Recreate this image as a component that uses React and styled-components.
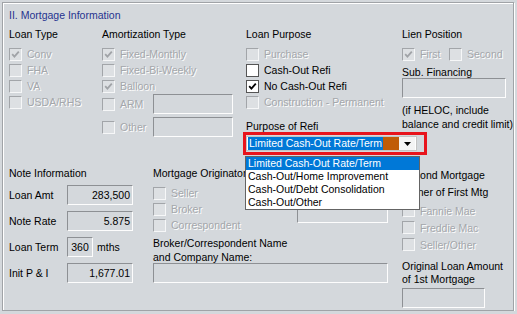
import React from "react";
import styled, { createGlobalStyle } from "styled-components";

const GlobalStyle = createGlobalStyle`
  html, body { margin: 0; padding: 0; background: #d4d8dc; }
  body {
    font-family: "Liberation Sans", Arial, sans-serif;
    font-size: 10.5px;
    color: #000;
  }
  * { box-sizing: border-box; }
`;

const Frame = styled.div`
  margin: 2px 0 0 2px;
  width: 512px;
  height: 309px;
  border: 1px solid #a0a3a7;
  box-shadow: 1px 1px 0 #fff, inset 1px 1px 0 #fff;
  padding: 5px 6px 0 6px;
`;

const Title = styled.div`
  height: 14px;
  line-height: 14px;
  color: #26338f;
  white-space: nowrap;
`;

const TopGrid = styled.div`
  margin-top: 5px;
  height: 139px;
  display: grid;
  grid-template-columns: 93px 144px 156px 1fr;
  align-items: start;
`;

const BottomGrid = styled.div`
  display: grid;
  grid-template-columns: 144px 249px 1fr;
  align-items: start;
`;

const Column = styled.div`
  display: flex;
  flex-direction: column;
  min-width: 0;
`;

const Header = styled.div`
  height: 14px;
  line-height: 14px;
  margin-top: ${(p) => p.$mt || 0}px;
  margin-bottom: ${(p) => (p.$mb === undefined ? 5 : p.$mb)}px;
  white-space: nowrap;
`;

const Line = styled.div`
  height: ${(p) => p.$h || 14}px;
  line-height: ${(p) => p.$h || 14}px;
  margin-top: ${(p) => p.$mt || 0}px;
  white-space: nowrap;
`;

const Row = styled.div`
  display: flex;
  align-items: center;
  gap: 5px;
  height: ${(p) => p.$h || 16}px;
  margin-top: ${(p) => p.$mt || 0}px;
  white-space: nowrap;
`;

const Box = styled.span`
  width: 13px;
  height: 13px;
  flex: none;
  display: inline-flex;
  align-items: center;
  justify-content: center;
  border: 1px solid;
  ${(p) =>
    p.$enabled
      ? "background:#fff;border-color:#555;"
      : "background:#dde0e3;border-color:#a2a5a9 #f6f7f8 #f6f7f8 #a2a5a9;"}
`;

const Label = styled.span`
  color: ${(p) => (p.$enabled ? "#000" : "#a4a7ab")};
  text-shadow: ${(p) => (p.$enabled ? "none" : "1px 1px 0 #fff")};
  width: ${(p) => (p.$w ? `${p.$w}px` : "auto")};
  flex: none;
`;

const TextBox = styled.div`
  width: ${(p) => p.$w}px;
  height: 20px;
  flex: none;
  border: 1px solid;
  border-color: #8d9094 #fdfdfd #fdfdfd #8d9094;
  line-height: 18px;
  text-align: ${(p) => p.$align || "right"};
  padding: 0 2px;
  margin-top: ${(p) => p.$mt || 0}px;
  margin-left: ${(p) => p.$ml || 0}px;
`;

const FieldRow = styled.div`
  display: flex;
  align-items: center;
  height: 20px;
  margin-top: ${(p) => p.$mt || 6}px;
  white-space: nowrap;
`;

const FieldLabel = styled.span`
  width: 58px;
  flex: none;
`;

const Unit = styled.span`
  margin-left: 4px;
`;

const Split = styled.div`
  display: flex;
`;

const SubList = styled.div`
  width: ${(p) => p.$w}px;
  display: flex;
  flex-direction: column;
  padding-top: ${(p) => p.$pt || 0}px;
`;

const RedWrap = styled.div`
  position: relative;
  margin-left: -3px;
  width: 184px;
  height: 23px;
  border: 3px solid #e8141c;
  padding: 1px 7px 1px 0;
`;

const Select = styled.div`
  display: flex;
  height: 15px;
  border: 1px solid #c4c4c4;
  background: #fff;
  padding: 0 1px;
  align-items: center;
`;

const SelValue = styled.span`
  height: 13px;
  line-height: 13px;
  background: #0078d7;
  color: #fff;
  padding: 0 1px;
  white-space: nowrap;
`;

const SelFill = styled.span`
  flex: 1;
  height: 13px;
  background: #c05c08;
`;

const SelButton = styled.span`
  width: 16px;
  height: 13px;
  background: #f4f4f4;
  display: flex;
  align-items: center;
  justify-content: center;
`;

const List = styled.div`
  position: absolute;
  left: -1px;
  top: 21px;
  width: 175px;
  border: 1px solid #646464;
  background: #fff;
  z-index: 5;
`;

const Item = styled.div`
  height: 13px;
  line-height: 13px;
  padding-left: 2px;
  white-space: nowrap;
  background: ${(p) => (p.$sel ? "#0078d7" : "#fff")};
  color: ${(p) => (p.$sel ? "#fff" : "#000")};
`;

function Check({ label, checked, enabled, w, h, mt, children }) {
  return (
    <Row $h={h} $mt={mt}>
      <Box $enabled={enabled}>
        {checked && (
          <svg width="9" height="9" viewBox="0 0 9 9">
            <path
              d="M1.2 4.2 L3.4 6.6 L7.8 1.6"
              fill="none"
              stroke={enabled ? "#000" : "#a0a3a7"}
              strokeWidth="1.8"
            />
          </svg>
        )}
      </Box>
      <Label $enabled={enabled} $w={w}>
        {label}
      </Label>
      {children}
    </Row>
  );
}

export default function App() {
  return (
    <>
      <GlobalStyle />
      <Frame>
        <Title>II. Mortgage Information</Title>
        <TopGrid>
          <Column>
            <Header>Loan Type</Header>
            <Check label="Conv" checked />
            <Check label="FHA" />
            <Check label="VA" />
            <Check label="USDA/RHS" />
          </Column>
          <Column>
            <Header>Amortization Type</Header>
            <Check label="Fixed-Monthly" checked />
            <Check label="Fixed-Bi-Weekly" />
            <Check label="Balloon" checked />
            <Check label="ARM" w={28} h={20}>
              <TextBox $w={80} />
            </Check>
            <Check label="Other" w={28} h={20} mt={3}>
              <TextBox $w={80} />
            </Check>
          </Column>
          <Column>
            <Header>Loan Purpose</Header>
            <Check label="Purchase" />
            <Check label="Cash-Out Refi" enabled />
            <Check label="No Cash-Out Refi" enabled checked />
            <Check label="Construction - Permanent" />
            <Line $mt={10} $h={12}>Purpose of Refi</Line>
            <RedWrap>
              <Select>
                <SelValue>Limited Cash-Out Rate/Term</SelValue>
                <SelFill />
                <SelButton>
                  <svg width="7" height="4" viewBox="0 0 7 4">
                    <polygon points="0,0 7,0 3.5,4" fill="#000" />
                  </svg>
                </SelButton>
              </Select>
              <List>
                <Item $sel>Limited Cash-Out Rate/Term</Item>
                <Item>Cash-Out/Home Improvement</Item>
                <Item>Cash-Out/Debt Consolidation</Item>
                <Item>Cash-Out/Other</Item>
              </List>
            </RedWrap>
          </Column>
          <Column>
            <Header>Lien Position</Header>
            <Split>
              <Check label="First" checked w={29} />
              <SubList $w={60}>
                <Check label="Second" />
              </SubList>
            </Split>
            <Line $mt={3}>Sub. Financing</Line>
            <TextBox $w={104} $mt={-1} />
            <Line $mt={5}>(if HELOC, include</Line>
            <Line>balance and credit limit)</Line>
          </Column>
        </TopGrid>
        <BottomGrid>
          <Column>
            <Header $mb={0}>Note Information</Header>
            <FieldRow $mt={5}>
              <FieldLabel>Loan Amt</FieldLabel>
              <TextBox $w={66}>283,500</TextBox>
            </FieldRow>
            <FieldRow>
              <FieldLabel>Note Rate</FieldLabel>
              <TextBox $w={66}>5.875</TextBox>
            </FieldRow>
            <FieldRow>
              <FieldLabel>Loan Term</FieldLabel>
              <TextBox $w={26} $align="center">360</TextBox>
              <Unit>mths</Unit>
            </FieldRow>
            <FieldRow>
              <FieldLabel>Init P &amp; I</FieldLabel>
              <TextBox $w={66}>1,677.01</TextBox>
            </FieldRow>
          </Column>
          <Column>
            <Header $mb={0}>Mortgage Originator</Header>
            <Split>
              <SubList $w={144} $pt={5}>
                <Check label="Seller" />
                <Check label="Broker" />
                <Check label="Correspondent" />
              </SubList>
              <SubList $w={91} $pt={23}>
                <TextBox $w={91} />
              </SubList>
            </Split>
            <Line $mt={3}>Broker/Correspondent Name</Line>
            <Line>and Company Name:</Line>
            <TextBox $w={235} $mt={-1} />
          </Column>
          <Column>
            <Header $mt={2} $mb={0}>Second Mortgage</Header>
            <Line $mt={3}>Owner of First Mtg</Line>
            <Check label="Fannie Mae" h={17} mt={3} />
            <Check label="Freddie Mac" h={17} />
            <Check label="Seller/Other" h={17} />
            <Line $mt={7} $h={13}>Original Loan Amount</Line>
            <Line $h={13}>of 1st Mortgage</Line>
            <TextBox $w={83} $mt={2} />
          </Column>
        </BottomGrid>
      </Frame>
    </>
  );
}
